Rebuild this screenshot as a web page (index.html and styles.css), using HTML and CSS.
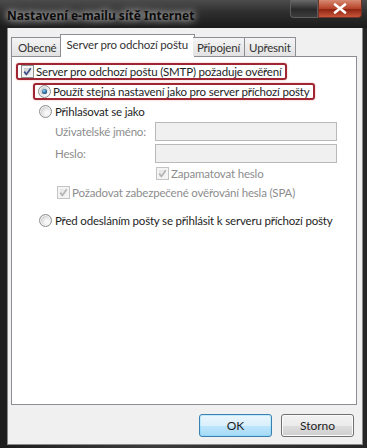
FILE: index.html
```html
<!DOCTYPE html>
<html lang="cs">
<head>
    <meta charset="UTF-8">
    <title>Nastavení e-mailu sítě Internet</title>
    <link rel="stylesheet" href="styles.css">
</head>
<body>
    <div class="window">
        <div class="titlebar">
            <span class="title">Nastavení e-mailu sítě Internet</span>
            <div class="controls">
                <span class="ctl-btn"></span>
                <span class="ctl-close">
                    <svg width="14" height="11" viewBox="0 0 14 11"><path d="M2 1.5 L12 9.5 M12 1.5 L2 9.5" stroke="#fff" stroke-width="2.6" stroke-linecap="round"/></svg>
                </span>
            </div>
        </div>

        <div class="client">
            <div class="tabs">
                <span class="tab">Obecné</span>
                <span class="tab active">Server pro odchozí poštu</span>
                <span class="tab">Připojení</span>
                <span class="tab">Upřesnit</span>
            </div>

            <div class="panel">
                <div class="row row-smtp">
                    <span class="mark">
                        <span class="check on"><svg width="11" height="11" viewBox="0 0 11 11"><path d="M2.2 5.6 L4.4 8.4 L8.8 2.2" stroke="#3d4f86" stroke-width="1.7" fill="none"/></svg></span>
                        <span>Server pro odchozí poštu (SMTP) požaduje ověření</span>
                    </span>
                </div>
                <div class="row row-same">
                    <span class="mark">
                        <span class="radio on"></span>
                        <span>Použít stejná nastavení jako pro server příchozí pošty</span>
                    </span>
                </div>
                <div class="row row-login">
                    <span class="radio"></span>
                    <span>Přihlašovat se jako</span>
                </div>
                <div class="row field">
                    <span class="field-label">Uživatelské jméno:</span>
                    <span class="input"></span>
                </div>
                <div class="row field">
                    <span class="field-label">Heslo:</span>
                    <span class="input"></span>
                </div>
                <div class="row row-remember disabled">
                    <span class="check on off"><svg width="11" height="11" viewBox="0 0 11 11"><path d="M2.2 5.6 L4.4 8.4 L8.8 2.2" stroke="#b4b4b4" stroke-width="1.7" fill="none"/></svg></span>
                    <span>Zapamatovat heslo</span>
                </div>
                <div class="row row-spa disabled">
                    <span class="check on off"><svg width="11" height="11" viewBox="0 0 11 11"><path d="M2.2 5.6 L4.4 8.4 L8.8 2.2" stroke="#b4b4b4" stroke-width="1.7" fill="none"/></svg></span>
                    <span>Požadovat zabezpečené ověřování hesla (SPA)</span>
                </div>
                <div class="row row-before">
                    <span class="radio"></span>
                    <span>Před odesláním pošty se přihlásit k serveru příchozí pošty</span>
                </div>
            </div>

            <div class="buttons">
                <button class="btn default">OK</button>
                <button class="btn">Storno</button>
            </div>
        </div>
    </div>
</body>
</html>
```

FILE: styles.css
```css
body {
    margin: 0;
    font-family: Lato, "Liberation Sans", sans-serif;
    font-size: 11.5px;
    letter-spacing: -0.18px;
    color: #1e1e1e;
    white-space: nowrap;
}
.window {
    width: 367px;
    height: 448px;
    box-sizing: border-box;
    display: flex;
    flex-direction: column;
    padding: 0 4px 3px 7px;
    background: linear-gradient(90deg, #1d1d1d, #3b3b3b 40%, #262626 100%);
}
.titlebar {
    height: 28px;
    display: flex;
    align-items: flex-start;
    margin-left: -7px;
    margin-right: -4px;
    background: linear-gradient(180deg, #4c4c4c 0, #2e2e2e 45%, #1b1b1b 100%);
}
.title {
    margin: 7px 0 0 7px;
    font-family: "Noto Sans", sans-serif;
    font-weight: bold;
    font-size: 12px;
    letter-spacing: 0;
    color: #0c0c0c;
    text-shadow: 0 0 6px rgba(255, 255, 255, 0.85), 0 0 12px rgba(255, 255, 255, 0.5);
}
.controls {
    margin-left: auto;
    margin-right: 5px;
    display: flex;
    height: 18px;
}
.ctl-btn {
    width: 26px;
    height: 17px;
    border: 1px solid #5e5e5e;
    border-top: none;
    border-radius: 0 0 0 4px;
    background: linear-gradient(180deg, #6a6a6a, #2a2a2a 55%, #3c3c3c);
}
.ctl-close {
    width: 42px;
    height: 17px;
    border: 1px solid #6e3328;
    border-top: none;
    border-radius: 0 0 4px 0;
    background: linear-gradient(180deg, #d88a72, #b5442a 50%, #8f2412 55%, #c9553a);
    display: flex;
    align-items: center;
    justify-content: center;
}
.client {
    flex: 1;
    background: #f0f0f0;
    display: flex;
    flex-direction: column;
    padding: 5px 5px 0 3px;
    border: 1px solid #8a8a8a;
    border-top: none;
}
.tabs {
    display: flex;
    align-items: flex-end;
    height: 23px;
    position: relative;
    z-index: 1;
}
.tab {
    height: 18px;
    line-height: 19px;
    padding: 0 4px;
    border: 1px solid #8c8e94;
    border-bottom: none;
    border-right: none;
    background: linear-gradient(180deg, #f4f4f4, #e2e2e2);
    color: #333;
}
.tab:first-child {
    padding: 0 5px 0 6px;
}
.tab:last-child {
    border-right: 1px solid #8c8e94;
}
.tab.active {
    height: 22px;
    line-height: 19px;
    padding: 0 6px;
    margin-bottom: -1px;
    background: #fff;
    border-right: 1px solid #8c8e94;
    margin-left: -2px;
    margin-right: -2px;
}
.tab.active + .tab {
    border-left: none;
}
.panel {
    height: 349px;
    box-sizing: border-box;
    background: #fff;
    border: 1px solid #8c8e94;
    padding: 6px 0 0 0;
}
.row {
    display: flex;
    align-items: center;
}
.mark {
    display: inline-flex;
    align-items: center;
    border: 2px solid #9e2531;
    border-radius: 3px;
    box-shadow: 0 0 2px rgba(220, 60, 60, 0.45);
    height: 13px;
    padding: 0 3px 0 3px;
}
.mark > span + span {
    margin-left: 2px;
}
.row-smtp {
    margin-left: 4px;
    height: 17px;
}
.row-same {
    margin-left: 21px;
    margin-top: 3px;
    height: 17px;
}
.row-login {
    margin-left: 27px;
    margin-top: 3px;
    height: 16px;
}
.row-login .radio, .row-before .radio {
    margin-right: 3px;
}
.field {
    margin-top: 3px;
    height: 19px;
    color: #8d8d8d;
}
.field + .field {
    margin-top: 3px;
}
.field-label {
    width: 100px;
    margin-left: 43px;
}
.input {
    width: 180px;
    height: 17px;
    border: 1px solid #b9b9b9;
    background: #f0f0f0;
}
.disabled {
    color: #8d8d8d;
}
.row-remember {
    margin-left: 144px;
    margin-top: 3px;
    height: 14px;
}
.row-spa {
    margin-left: 45px;
    margin-top: 5px;
    height: 14px;
}
.row-remember .check, .row-spa .check {
    margin-right: 2px;
}
.row-before {
    margin-left: 27px;
    margin-top: 14px;
    height: 14px;
}
.check {
    width: 11px;
    height: 11px;
    border: 1px solid #8e8f8f;
    background: linear-gradient(135deg, #c4c4c4, #f6f6f6);
    box-shadow: inset 0 0 0 2px #f4f4f4;
    display: inline-flex;
    flex: none;
}
.check.off {
    border-color: #c4c4c4;
    background: linear-gradient(135deg, #e0e0e0, #f8f8f8);
}
.radio {
    width: 11px;
    height: 11px;
    border: 1px solid #8e8f8f;
    border-radius: 50%;
    background: radial-gradient(circle at 65% 65%, #f8f8f8 20%, #cfcfcf 70%);
    box-shadow: inset 0 0 0 1px #f2f2f2;
    display: inline-flex;
    align-items: center;
    justify-content: center;
    flex: none;
}
.radio.on::after {
    content: "";
    width: 5px;
    height: 5px;
    border-radius: 50%;
    background: radial-gradient(circle at 40% 35%, #8fd0f5, #1f5c8c 60%, #0c2f55);
    box-shadow: 0 0 1px #2a5b8c;
}
.buttons {
    display: flex;
    justify-content: flex-end;
    gap: 9px;
    padding-top: 9px;
    padding-right: 3px;
}
.btn {
    width: 73px;
    height: 23px;
    font-family: inherit;
    font-size: 12px;
    color: #1e1e1e;
    border: 1px solid #707070;
    border-radius: 3px;
    background: linear-gradient(180deg, #f2f2f2 0, #ebebeb 50%, #dddddd 51%, #cfcfcf 100%);
    box-shadow: inset 0 0 0 1px #fbfbfb;
}
.btn.default {
    border-color: #3c7fb1;
    background: linear-gradient(180deg, #eaf6fd 0, #d9f0fc 50%, #bee6fd 51%, #a7d9f5 100%);
    box-shadow: inset 0 0 0 1px #48d3ff40;
}
```
